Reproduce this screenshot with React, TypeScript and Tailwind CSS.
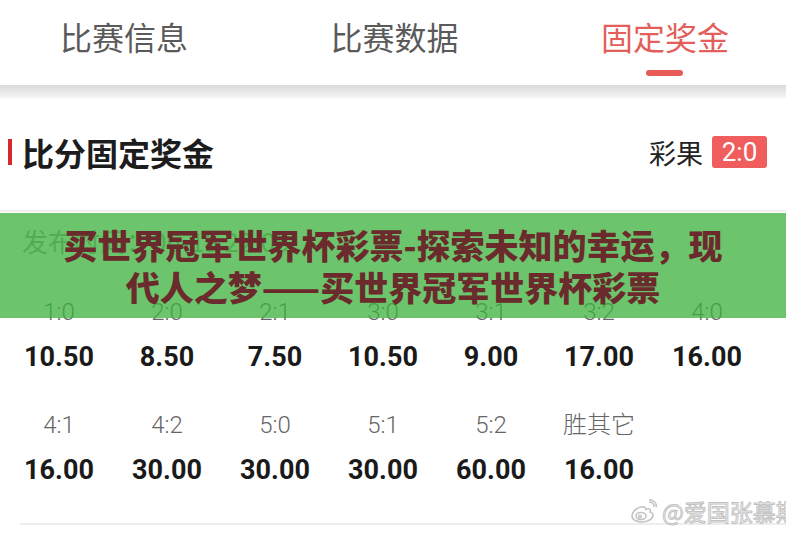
import React from 'react';

const cjk = { fontFamily: '"Noto Sans CJK SC", "Noto Sans", sans-serif' };
const num = { fontFamily: 'Roboto, "Noto Sans CJK SC", sans-serif' };

const tabs = ['比赛信息', '比赛数据', '固定奖金'];

const odds = [
  { score: '1:0', value: '10.50' },
  { score: '2:0', value: '8.50' },
  { score: '2:1', value: '7.50' },
  { score: '3:0', value: '10.50' },
  { score: '3:1', value: '9.00' },
  { score: '3:2', value: '17.00' },
  { score: '4:0', value: '16.00' },
  { score: '4:1', value: '16.00' },
  { score: '4:2', value: '30.00' },
  { score: '5:0', value: '30.00' },
  { score: '5:1', value: '30.00' },
  { score: '5:2', value: '60.00' },
  { score: '胜其它', value: '16.00' },
];

function WeiboMark() {
  return (
    <svg width="28" height="24" viewBox="0 0 28 24" fill="none" stroke="#c4c4c4" strokeWidth="1.6">
      <path d="M11 8c-5 1-9 5-9 9 0 4 5 6 10 6 6 0 11-3 11-7 0-2-2-3-3-3 1-2 0-4-3-3l-1 .5c0-2-2-3-5-2.5z" />
      <ellipse cx="11" cy="17" rx="5" ry="3.5" />
      <circle cx="10" cy="17.5" r="1.3" />
      <path d="M19 3c3 0 5 2 5 5" />
      <path d="M19 0.8c4.5 0 7.5 3 7.5 7.5" />
    </svg>
  );
}

export default function App() {
  return (
    <div className="w-[786px] h-[533px] overflow-hidden bg-white relative" style={cjk}>
      {/* tab bar */}
      <div className="h-[85px] flex justify-between pl-[60px] pr-[57px] pt-[14px]">
        {tabs.map((t, i) => (
          <div key={t} className="flex flex-col items-center">
            <span
              className={`text-[32px] leading-[44px] ${i === 2 ? 'text-[#e35f5c]' : 'text-[#5a5a5a]'}`}
            >
              {t}
            </span>
            {i === 2 && <div className="mt-[12px] h-[6px] w-[37px] rounded-full bg-[#e85a58]" />}
          </div>
        ))}
      </div>
      <div className="h-[13px] bg-gradient-to-b from-[#dadada] to-[#f6f6f6]" />

      {/* section header */}
      <div className="h-[112px] pb-[4px] flex items-center justify-between pl-[8px] pr-[19px]">
        <div className="flex items-center">
          <div className="w-[4px] h-[26px] bg-[#d42a2b]" />
          <span className="ml-[10px] text-[32px] font-bold text-[#1c1c1c] leading-none">比分固定奖金</span>
        </div>
        <div className="flex items-center">
          <span className="text-[27px] text-[#222] leading-none">彩果</span>
          <span
            className="ml-[9px] w-[55px] h-[32px] rounded-[3px] bg-[#ef5d5d] text-white text-[26px] leading-[32px] text-center"
            style={num}
          >
            2:0
          </span>
        </div>
      </div>
      <div className="h-[2px] bg-[#efefef]" />

      <div className="relative">
        <div className="h-[56px] flex items-center pl-[22px] text-[26px] text-[#9a9a9a]">
          发布时间：06-15 22:05
        </div>

        <div className="pl-[5px] mt-[28px] grid grid-cols-[repeat(7,108px)] gap-y-[34px]" style={num}>
          {odds.map((o) => (
            <div key={o.score} className="flex flex-col items-center">
              <span
                className="text-[24px] leading-[32px] text-[#666] font-light"
                style={o.score.length > 3 ? cjk : num}
              >
                {o.score}
              </span>
              <span className="mt-[11px] text-[27px] leading-[36px] font-bold text-[#1a1a1a]">{o.value}</span>
            </div>
          ))}
        </div>

        <div className="mt-[35px] ml-[20px] h-[2px] bg-[#ededed]" />

        {/* overlaid title banner */}
        <div className="absolute left-0 right-0 top-[1px] h-[105px] bg-[rgba(59,177,59,0.75)] flex flex-col items-center justify-center">
          <div className="text-[34px] leading-[42px] font-black text-[#6b2b2d]">
            买世界冠军世界杯彩票-探索未知的幸运，现
          </div>
          <div className="text-[34px] leading-[42px] font-black text-[#6b2b2d]">
            代人之梦——买世界冠军世界杯彩票
          </div>
        </div>
      </div>

      {/* watermark */}
      <div className="absolute left-[630px] top-[499px] flex items-center whitespace-nowrap">
        <WeiboMark />
        <span className="ml-[4px] text-[23px] leading-none text-white [-webkit-text-stroke:1px_#c2c2c2]">
          @爱国张慕斯
        </span>
      </div>
    </div>
  );
}
